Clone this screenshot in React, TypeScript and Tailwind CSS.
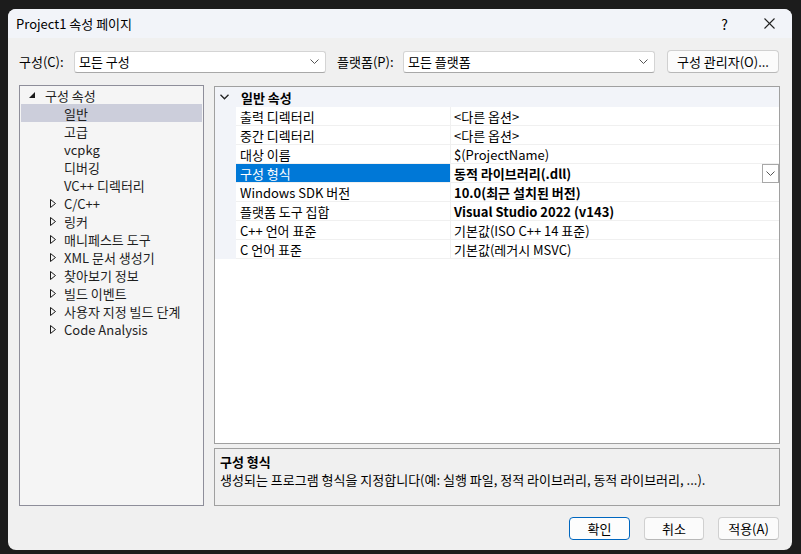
import React from "react";

const Chevron = ({ className = "" }: { className?: string }) => (
  <svg width="9" height="5" viewBox="0 0 9 5" className={className}>
    <polyline points="0.5,0.5 4.5,4.5 8.5,0.5" fill="none" stroke="#555" strokeWidth="1" />
  </svg>
);

const TriOpen = () => (
  <svg width="6" height="6" viewBox="0 0 6 6">
    <polygon points="6,0 6,6 0,6" fill="#1a1a1a" />
  </svg>
);

const TriClosed = () => (
  <svg width="6" height="9" viewBox="0 0 6 9">
    <polygon points="0.5,0.5 5.5,4.5 0.5,8.5" fill="none" stroke="#1a1a1a" strokeWidth="1" />
  </svg>
);

type TreeItem = { label: string; level: 0 | 1; arrow?: "open" | "closed"; selected?: boolean };

const tree: TreeItem[] = [
  { label: "구성 속성", level: 0, arrow: "open" },
  { label: "일반", level: 1, selected: true },
  { label: "고급", level: 1 },
  { label: "vcpkg", level: 1 },
  { label: "디버깅", level: 1 },
  { label: "VC++ 디렉터리", level: 1 },
  { label: "C/C++", level: 1, arrow: "closed" },
  { label: "링커", level: 1, arrow: "closed" },
  { label: "매니페스트 도구", level: 1, arrow: "closed" },
  { label: "XML 문서 생성기", level: 1, arrow: "closed" },
  { label: "찾아보기 정보", level: 1, arrow: "closed" },
  { label: "빌드 이벤트", level: 1, arrow: "closed" },
  { label: "사용자 지정 빌드 단계", level: 1, arrow: "closed" },
  { label: "Code Analysis", level: 1, arrow: "closed" },
];

type Prop = { name: string; value: string; bold?: boolean; selected?: boolean };

const props: Prop[] = [
  { name: "출력 디렉터리", value: "<다른 옵션>" },
  { name: "중간 디렉터리", value: "<다른 옵션>" },
  { name: "대상 이름", value: "$(ProjectName)" },
  { name: "구성 형식", value: "동적 라이브러리(.dll)", bold: true, selected: true },
  { name: "Windows SDK 버전", value: "10.0(최근 설치된 버전)", bold: true },
  { name: "플랫폼 도구 집합", value: "Visual Studio 2022 (v143)", bold: true },
  { name: "C++ 언어 표준", value: "기본값(ISO C++ 14 표준)" },
  { name: "C 언어 표준", value: "기본값(레거시 MSVC)" },
];

export default function App() {
  return (
    <div className="w-[801px] h-[554px] bg-[#1c1c1c] pl-[8px] pt-[9px] overflow-hidden font-['Noto_Sans_CJK_KR',sans-serif] text-[13px] text-black leading-none">
      <div className="w-[784px] h-[541px] bg-[#f0f0f0] rounded-[8px] overflow-hidden flex flex-col">
        {/* Title bar */}
        <div className="h-[29px] bg-[#f2f4f9] flex items-center pl-[8px] pr-[17px] shrink-0">
          <span className="flex-1">Project1 속성 페이지</span>
          <span className="mr-[36px] text-[14px]">?</span>
          <svg width="11" height="11" viewBox="0 0 11 11">
            <line x1="0.5" y1="0.5" x2="10.5" y2="10.5" stroke="#222" strokeWidth="1.1" />
            <line x1="10.5" y1="0.5" x2="0.5" y2="10.5" stroke="#222" strokeWidth="1.1" />
          </svg>
        </div>

        {/* Config row */}
        <div className="flex items-center h-[23px] mt-[12px] pl-[11px] pr-[13px] shrink-0">
          <span className="w-[55px]">구성(C):</span>
          <div className="w-[252px] h-[22px] bg-white border border-[#d4d4d4] border-b-[#a8a8a8] rounded-[3px] flex items-center pl-[4px] pr-[6px]">
            <span className="flex-1">모든 구성</span>
            <Chevron />
          </div>
          <span className="ml-[11px] w-[66px]">플랫폼(P):</span>
          <div className="w-[252px] h-[22px] bg-white border border-[#d4d4d4] border-b-[#a8a8a8] rounded-[3px] flex items-center pl-[4px] pr-[6px]">
            <span className="flex-1">모든 플랫폼</span>
            <Chevron />
          </div>
          <div className="ml-[12px] w-[112px] h-[23px] bg-[#fbfbfb] border border-[#d0d0d0] border-b-[#b8b8b8] rounded-[4px] flex items-center justify-center">
            구성 관리자(O)...
          </div>
        </div>

        {/* Main */}
        <div className="flex mt-[12px] pl-[11px] pr-[12px] shrink-0">
          {/* Tree */}
          <div className="w-[186px] h-[421px] border border-[#8e8e9a] bg-[#f5f5f5] text-[#1e1e1e]">
            {tree.map((t, i) => (
              <div
                key={i}
                className={`h-[18px] mx-[1px] flex items-center ${t.selected ? "bg-[#cccedb]" : ""}`}
              >
                {t.level === 0 ? (
                  <>
                    <span className="w-[13px] ml-[8px] flex items-center"><TriOpen /></span>
                    <span className="ml-[3px]">{t.label}</span>
                  </>
                ) : (
                  <>
                    <span className="w-[14px] ml-[29px] flex items-center">
                      {t.arrow === "closed" ? <TriClosed /> : null}
                    </span>
                    <span>{t.label}</span>
                  </>
                )}
              </div>
            ))}
          </div>

          {/* Right column */}
          <div className="ml-[10px] flex flex-col">
            <div className="w-[566px] h-[358px] mt-[1px] border border-[#a0a0a0] bg-white flex flex-col">
              <div className="h-[20px] bg-[#f2f4f9] flex items-center">
                <span className="w-[26px] pl-[5px] flex items-center">
                  <svg width="9" height="6" viewBox="0 0 9 6">
                    <polyline points="0.5,0.8 4.5,4.8 8.5,0.8" fill="none" stroke="#222" strokeWidth="1.3" />
                  </svg>
                </span>
                <span className="font-bold">일반 속성</span>
              </div>
              {props.map((p, i) => (
                <div key={i} className="h-[19px] flex">
                  <div className="w-[21px] bg-[#f2f4f9]" />
                  <div
                    className={`w-[214px] flex items-center pl-[4px] border-b border-[#f0f0f0] ${
                      p.selected ? "bg-[#0078d7] text-white border-[#0078d7]" : ""
                    }`}
                  >
                    {p.name}
                  </div>
                  <div className="flex-1 flex items-center border-l border-b border-[#f0f0f0] pl-[3px]">
                    <span className={`flex-1 ${p.bold ? "font-bold" : ""}`}>{p.value}</span>
                    {p.selected && (
                      <div className="w-[17px] h-[19px] border border-[#a8a8a8] bg-white flex items-center justify-center">
                        <Chevron />
                      </div>
                    )}
                  </div>
                </div>
              ))}
              <div className="flex-1" />
            </div>
            <div className="w-[566px] h-[58px] mt-[4px] border border-[#a0a0a0] bg-[#f0f0f0] px-[5px] pt-[3px]">
              <div className="font-bold h-[18px] flex items-center">구성 형식</div>
              <div className="h-[18px] flex items-center">
                생성되는 프로그램 형식을 지정합니다(예: 실행 파일, 정적 라이브러리, 동적 라이브러리, ...).
              </div>
            </div>
          </div>
        </div>

        {/* Buttons */}
        <div className="flex justify-end mt-[11px] pr-[13px] gap-[14px] shrink-0">
          <div className="w-[61px] h-[23px] bg-[#fdfdfd] border-[1.5px] border-[#0067c0] rounded-[4px] flex items-center justify-center">
            확인
          </div>
          <div className="w-[60px] h-[23px] bg-[#fbfbfb] border border-[#d0d0d0] border-b-[#b8b8b8] rounded-[4px] flex items-center justify-center">
            취소
          </div>
          <div className="w-[61px] h-[23px] bg-[#fbfbfb] border border-[#d0d0d0] border-b-[#b8b8b8] rounded-[4px] flex items-center justify-center">
            적용(A)
          </div>
        </div>
      </div>
    </div>
  );
}
